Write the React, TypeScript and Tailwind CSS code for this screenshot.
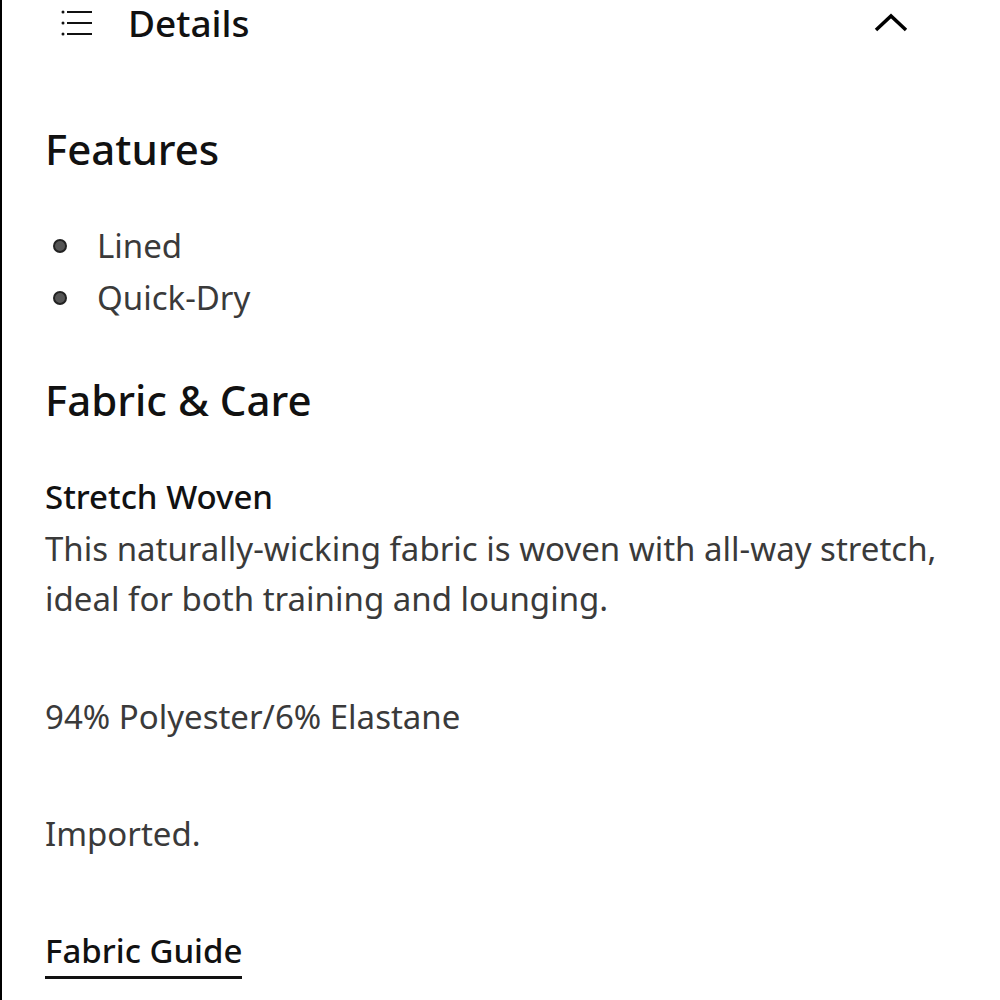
import React from "react";

export default function App() {
  return (
    <div
      className="w-[1000px] h-[1000px] bg-white border-l-2 border-black overflow-hidden relative"
      style={{ fontFamily: "'Noto Sans', sans-serif" }}
    >
      <div className="flex items-center justify-between pl-[58px] pr-[92px] h-[46px]">
        <div className="flex items-center gap-[36px]">
          <svg width="32" height="26" viewBox="0 0 32 26" fill="none">
            <circle cx="3" cy="2" r="1.5" fill="#111" />
            <circle cx="3" cy="13" r="1.5" fill="#111" />
            <circle cx="3" cy="24" r="1.5" fill="#111" />
            <path d="M7 2H33M7 13H33M7 24H33" stroke="#111" strokeWidth="2" />
          </svg>
          <span className="text-[37px] font-medium text-[#111] leading-[46px]">Details</span>
        </div>
        <svg width="34" height="20" viewBox="0 0 34 20" fill="none">
          <path d="M2 17L17 3L32 17" stroke="#000" strokeWidth="3.5" />
        </svg>
      </div>

      <div className="pl-[43px] pr-[40px]">
        <h2 className="mt-[79px] text-[42px] font-medium text-[#111] leading-[48px]">Features</h2>
        <ul className="mt-[47px] flex flex-col">
          <li className="flex items-center h-[52px] text-[33px] text-[#3a3a3a]">
            <span className="w-[14px] h-[14px] rounded-full bg-[#555] border-2 border-[#222] ml-[8px] mr-[30px]" />
            Lined
          </li>
          <li className="flex items-center h-[52px] text-[33px] text-[#3a3a3a]">
            <span className="w-[14px] h-[14px] rounded-full bg-[#555] border-2 border-[#222] ml-[8px] mr-[30px]" />
            Quick-Dry
          </li>
        </ul>
        <h2 className="mt-[52px] text-[42px] font-medium text-[#111] leading-[48px]">Fabric &amp; Care</h2>
        <h3 className="mt-[48px] text-[33px] font-medium text-[#111] leading-[50px]">Stretch Woven</h3>
        <p className="mt-[2px] text-[33px] text-[#3a3a3a] leading-[50px]">
          This naturally-wicking fabric is woven with all-way stretch,
          <br />
          ideal for both training and lounging.
        </p>
        <p className="mt-[68px] text-[33px] text-[#3a3a3a] leading-[50px]">94% Polyester/6% Elastane</p>
        <p className="mt-[67px] text-[33px] text-[#3a3a3a] leading-[50px]">Imported.</p>
        <a className="mt-[66px] inline-block text-[33px] font-medium text-[#111] leading-[51px] border-b-[3px] border-[#111]">
          Fabric Guide
        </a>
      </div>
    </div>
  );
}
